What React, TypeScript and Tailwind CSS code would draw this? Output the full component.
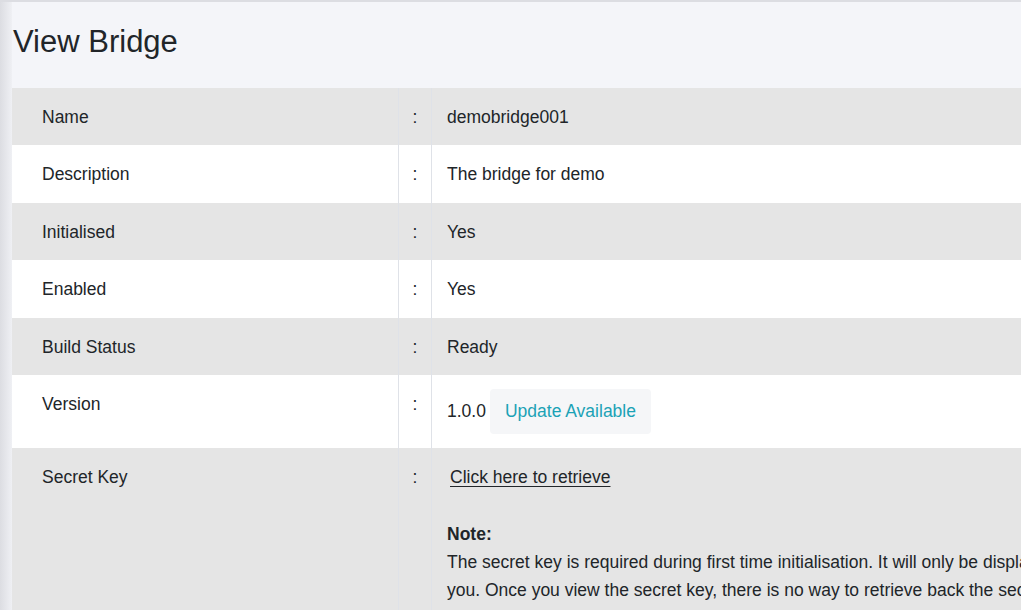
import React from 'react';

const rows: { label: string; value: string }[] = [
  { label: 'Name', value: 'demobridge001' },
  { label: 'Description', value: 'The bridge for demo' },
  { label: 'Initialised', value: 'Yes' },
  { label: 'Enabled', value: 'Yes' },
  { label: 'Build Status', value: 'Ready' },
];

const Row = ({ label, odd, children, valueCls = 'pt-[16px] pb-[14px]' }: { label: string; odd: boolean; children: React.ReactNode; valueCls?: string }) => (
  <div className={`flex ${odd ? 'bg-[#e5e5e5]' : 'bg-white'}`}>
    <div className="w-[386px] shrink-0 pl-[30px] pt-[16px] pb-[14px] leading-[27.4px]">{label}</div>
    <div className="w-[34px] shrink-0 border-l border-r border-[#dfe2e8] pt-[16px] pb-[14px] text-center leading-[27.4px]">:</div>
    <div className={`flex-1 pl-[15px] leading-[27.4px] whitespace-nowrap ${valueCls}`}>{children}</div>
  </div>
);

export default function App() {
  return (
    <div className="flex h-[610px] w-[1028px] overflow-hidden bg-white text-[#212529] font-['Liberation_Sans',Arial,sans-serif] text-[17.5px]">
      <div className="flex w-[1021px] shrink-0 border-t-2 border-[#dcdde2] bg-[#f4f5f9]">
        <div className="w-[12px] shrink-0 bg-gradient-to-r from-[#dcdde2] to-[#eff0f4]" />
        <div className="flex-1 overflow-hidden">
          <h1 className="pl-[1px] pt-[22px] pb-[28px] text-[31px] leading-[36px]">View Bridge</h1>
          <div className="shadow-[inset_0_1px_0_#dcdde2,inset_6px_0_8px_-6px_rgba(0,0,0,0.08)]">
            {rows.map((r, i) => (
              <Row key={r.label} label={r.label} odd={i % 2 === 0}>
                {r.value}
              </Row>
            ))}
            <Row label="Version" odd={false} valueCls="py-[14px]">
              <div className="flex items-center">
                <span>1.0.0</span>
                <span className="ml-[4px] flex h-[45px] items-center rounded-[4px] bg-[#f5f6f8] px-[15px] text-[#1ba2b6]">
                  Update Available
                </span>
              </div>
            </Row>
            <Row label="Secret Key" odd={true} valueCls="pt-[15px] pb-[14px] h-[200px]">
              <div className="leading-[28.3px]">
                <span className="ml-[3px] underline underline-offset-[3px]">Click here to retrieve</span>
                <br />
                <br />
                <span className="font-bold">Note:</span>
                <br />
                The secret key is required during first time initialisation. It will only be displayed once to
                <br />
                you. Once you view the secret key, there is no way to retrieve back the secret key again.
              </div>
            </Row>
          </div>
        </div>
      </div>
      <div className="flex-1 bg-white" />
    </div>
  );
}
